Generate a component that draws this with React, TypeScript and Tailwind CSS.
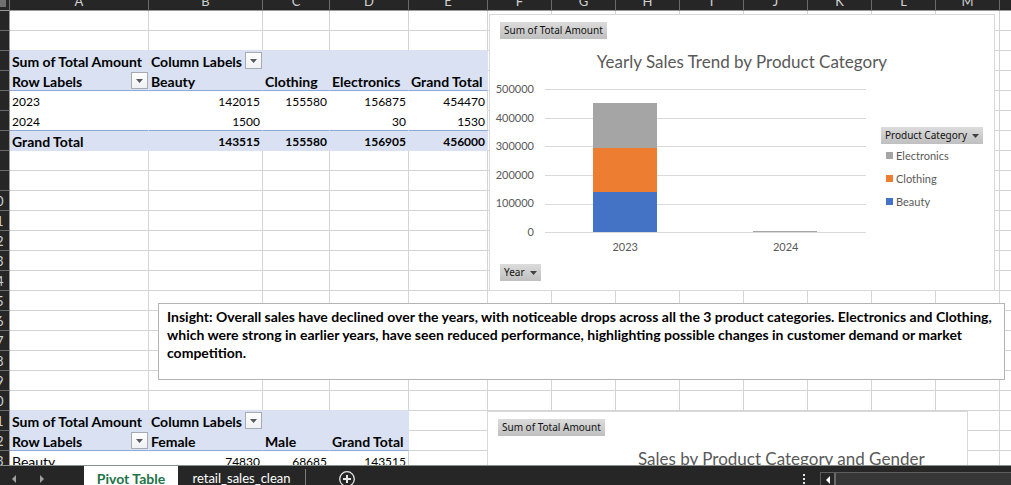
import type { ReactNode } from "react";

type Cell = { value: string; align: "left" | "right"; filter?: string };
type PivotRow = { kind: "head" | "headEnd" | "body" | "bodyEnd" | "total"; cells: (Cell | null)[] };

const letters = ["A", "B", "C", "D", "E", "F", "G", "H", "I", "J", "K", "L", "M", "N", "O", "P", "Q", "R", "S", "T"];
const label = (value: string, filter?: string): Cell => ({ value, align: "left", filter });
const num = (value: string): Cell => ({ value, align: "right" });

const pivotRows: Record<number, PivotRow> = {
  3: {
    kind: "head",
    cells: [label("Sum of Total Amount"), label("Column Labels", "Filter columns"), null, null, null],
  },
  4: {
    kind: "headEnd",
    cells: [label("Row Labels", "Filter rows"), label("Beauty"), label("Clothing"), label("Electronics"), label("Grand Total")],
  },
  5: { kind: "body", cells: [label("2023"), num("142015"), num("155580"), num("156875"), num("454470")] },
  6: { kind: "bodyEnd", cells: [label("2024"), num("1500"), null, num("30"), num("1530")] },
  7: { kind: "total", cells: [label("Grand Total"), num("143515"), num("155580"), num("156905"), num("456000")] },
  21: {
    kind: "head",
    cells: [label("Sum of Total Amount"), label("Column Labels", "Filter columns"), null, null],
  },
  22: {
    kind: "headEnd",
    cells: [label("Row Labels", "Filter rows"), label("Female"), label("Male"), label("Grand Total")],
  },
  23: { kind: "body", cells: [label("Beauty"), num("74830"), num("68685"), num("143515")] },
};

const kindClass = {
  head: "bg-[#d9e1f2] border-[#d9e1f2] font-bold",
  headEnd: "bg-[#d9e1f2] border-r-[#d9e1f2] border-b-[#8ea9db] font-bold",
  body: "border-white",
  bodyEnd: "border-r-white border-b-[#8ea9db]",
  total: "bg-[#d9e1f2] border-[#d9e1f2] font-bold",
};

function cellClass(row: number, col: number) {
  const pivot = pivotRows[row];
  if (pivot && col < pivot.cells.length) {
    const last = col === pivot.cells.length - 1;
    if (last && pivot.kind === "body") return "border-r-[#d4d4d4] border-b-white";
    if (last && pivot.kind === "bodyEnd") return "border-r-[#d4d4d4] border-b-[#8ea9db]";
    return kindClass[pivot.kind];
  }
  const below = pivotRows[row + 1];
  if (below && col < below.cells.length) return "border-r-[#d4d4d4] border-b-[#d9e1f2]";
  return "border-[#d4d4d4]";
}

function FilterButton({ name }: { name: string }) {
  return (
    <button
      type="button"
      aria-label={name}
      className="flex size-[17px] shrink-0 items-center justify-center border border-[#a6abb3] bg-linear-to-b from-white to-[#f0f1f4]"
    >
      <svg width="7" height="4" viewBox="0 0 7 4">
        <path d="M0 0h7L3.500 4z" fill="#595959" />
      </svg>
    </button>
  );
}

function CellContent({ cell }: { cell?: Cell | null }) {
  const numeric = cell ? /^\d+$/.test(cell.value) : false;
  return (
    <div
      className={`flex h-[19px] items-center pl-[2px] whitespace-nowrap ${
        cell?.align === "right" ? "justify-end pr-[2px]" : "justify-between"
      }`}
    >
      {cell && <span className={numeric ? "pt-[2px] text-xs" : "pt-[2px] text-sm"}>{cell.value}</span>}
      {cell?.filter && <FilterButton name={cell.filter} />}
    </div>
  );
}

function Sheet() {
  const rows = Array.from({ length: 60 }, (_, i) => i + 1);
  return (
    <table className="w-px table-fixed border-separate border-spacing-0 text-[13px]">
      <colgroup>
        <col className="w-[10px]" />
        <col className="w-[139px]" />
        <col className="w-[114px]" />
        <col className="w-[67px]" />
        <col className="w-[79px]" />
        <col className="w-[79px]" />
        {letters.slice(5).map((l) => (
          <col key={l} className="w-16" />
        ))}
      </colgroup>
      <thead>
        <tr className="bg-[#262626] text-[#d0d0d0]">
          <td className="border-r border-b border-r-[#6a6a6a] border-b-[#9a9a9a] p-0 align-top">
            <div className="h-[7px] w-[6px] bg-[#6f6f6f]" />
          </td>
          {letters.map((l) => (
            <th key={l} scope="col" className="border-r border-b border-r-[#6a6a6a] border-b-[#9a9a9a] p-0 font-normal">
              <div className="flex h-[10px] items-end justify-center overflow-hidden leading-[18px]">{l}</div>
            </th>
          ))}
        </tr>
      </thead>
      <tbody>
        {rows.map((r) => (
          <tr key={r}>
            <th
              scope="row"
              className="border-r border-b border-r-[#9a9a9a] border-b-[#6a6a6a] bg-[#262626] p-0 font-normal text-[#d0d0d0]"
            >
              <div className="flex h-[19px] justify-end overflow-hidden">
                <span className="w-[26px] shrink-0 text-center text-[13px] leading-[21px]">{r}</span>
              </div>
            </th>
            {letters.map((l, c) => (
              <td key={l} className={`border-r border-b p-0 ${cellClass(r, c)}`}>
                <CellContent cell={pivotRows[r]?.cells[c]} />
              </td>
            ))}
          </tr>
        ))}
      </tbody>
    </table>
  );
}

function FieldButton({ children, arrow }: { children: ReactNode; arrow?: boolean }) {
  return (
    <button
      type="button"
      className="flex h-[17px] w-fit items-center gap-[5px] bg-linear-to-b from-[#dcdcdc] to-[#bfbfbf] px-1 font-['Noto_Sans',sans-serif] text-[10px] leading-[17px] whitespace-nowrap text-[#111]"
    >
      {children}
      {arrow && (
        <svg width="7" height="4" viewBox="0 0 7 4">
          <path d="M0 0h7L3.500 4z" fill="#404040" />
        </svg>
      )}
    </button>
  );
}

const ticks = ["500000", "400000", "300000", "200000", "100000", "0"];
const legend = [
  { name: "Electronics", swatch: "bg-[#a5a5a5]" },
  { name: "Clothing", swatch: "bg-[#ed7d31]" },
  { name: "Beauty", swatch: "bg-[#4472c4]" },
];

function YearlyChart() {
  return (
    <section className="absolute top-[14px] left-[489px] flex h-[277px] w-[506px] flex-col border border-[#d9d9d9] bg-white px-[10px] pt-[7px] text-[#595959]">
      <FieldButton>Sum of Total Amount</FieldButton>
      <h2 className="mt-3 text-center text-[17px] leading-[22px]">Yearly Sales Trend by Product Category</h2>
      <div className="mt-[9px] flex">
        <div className="flex h-[157px] w-[34px] flex-col items-end justify-between text-[11px] leading-[14px]">
          {ticks.map((t) => (
            <span key={t}>{t}</span>
          ))}
        </div>
        <div className="ml-[11px] w-[321px] pt-[7px]">
          <svg width="321" height="144" viewBox="0 0 321 144" shapeRendering="crispEdges" className="block">
            <path d="M0 .5h321M0 29.500h321M0 57.500h321M0 86.500h321M0 115.500h321M0 143.500h321" stroke="#d9d9d9" />
            <rect x="48" y="14" width="64" height="45" fill="#a5a5a5" />
            <rect x="48" y="59" width="64" height="44" fill="#ed7d31" />
            <rect x="48" y="103" width="64" height="40" fill="#4472c4" />
            <rect x="208" y="142" width="64" height="1" fill="#a5a5a5" />
          </svg>
          <div className="mt-[7px] flex justify-around text-[11px] leading-[14px]">
            <span>2023</span>
            <span>2024</span>
          </div>
        </div>
        <div className="ml-[15px] pt-[45px]">
          <FieldButton arrow>Product Category</FieldButton>
          <ul className="mt-1 flex flex-col gap-2 pl-[5px] text-[11px] leading-[15px]">
            {legend.map((item) => (
              <li key={item.name} className="flex items-center gap-[3px]">
                <span className={`size-[7px] ${item.swatch}`} />
                {item.name}
              </li>
            ))}
          </ul>
        </div>
      </div>
      <div className="mt-auto pb-[9px]">
        <FieldButton arrow>Year</FieldButton>
      </div>
    </section>
  );
}

function GenderChart() {
  return (
    <section className="absolute top-[411px] left-[487px] h-[277px] w-[481px] border border-[#d9d9d9] bg-white px-[10px] pt-[7px] text-[#595959]">
      <FieldButton>Sum of Total Amount</FieldButton>
      <h2 className="mt-3 pl-[140px] text-[17px] leading-[22px] whitespace-nowrap">
        Sales by Product Category and Gender
      </h2>
    </section>
  );
}

function Insight() {
  return (
    <p className="absolute top-[303px] left-[158px] h-[77px] w-[847px] border border-[#b4b4b4] bg-white px-2 py-1 text-sm leading-[18px] font-bold whitespace-nowrap">
      Insight: Overall sales have declined over the years, with noticeable drops across all the 3 product categories.
      Electronics and Clothing,
      <br />
      which were strong in earlier years, have seen reduced performance, highlighting possible changes in customer
      demand or market
      <br />
      competition.
    </p>
  );
}

function TabBar() {
  return (
    <nav className="flex h-5 shrink-0 border-t border-[#8a918a] bg-[#262626] text-[13px] leading-[25px] text-white">
      <div className="flex w-[84px] items-center gap-6 pt-[7px] pl-3">
        <button type="button" aria-label="Previous sheet">
          <svg width="4" height="8" viewBox="0 0 4 8">
            <path d="M4 0v8L0 4z" fill="#a0a0a0" />
          </svg>
        </button>
        <button type="button" aria-label="Next sheet">
          <svg width="4" height="8" viewBox="0 0 4 8">
            <path d="M0 0v8l4-4z" fill="#a0a0a0" />
          </svg>
        </button>
      </div>
      <button type="button" className="w-[94px] bg-white text-sm leading-[25px] font-bold text-[#217346]">
        Pivot Table
      </button>
      <button type="button" className="w-[127px]">
        retail_sales_clean
      </button>
      <span className="mt-[3px] w-px bg-[#7a7a7a]" />
      <button type="button" aria-label="New sheet" className="ml-[33px] overflow-hidden pt-[5px]">
        <svg width="16" height="16" viewBox="0 0 16 16" fill="none" stroke="#e6e6e6">
          <circle cx="8" cy="8" r="7.300" strokeWidth="1.300" />
          <path d="M8 4v8M4 8h8" strokeWidth="2" />
        </svg>
      </button>
      <svg width="3" height="11" viewBox="0 0 3 11" className="mt-2 mr-[14px] ml-auto" fill="#e6e6e6">
        <path d="M0 0h2v2H0zM0 4h2v2H0zM0 8h2v2H0z" />
      </svg>
      <div className="mt-[6px] flex w-[191px] border-t border-l border-[#5e5e5e] bg-[#363636]">
        <button
          type="button"
          aria-label="Scroll left"
          className="flex w-[15px] justify-center border-r-2 border-[#6a6a6a] bg-[#262626] pt-[3px]"
        >
          <svg width="4" height="8" viewBox="0 0 4 8">
            <path d="M4 0v8L0 4z" fill="#fff" />
          </svg>
        </button>
      </div>
    </nav>
  );
}

export default function App() {
  return (
    <div className="flex h-screen flex-col overflow-hidden bg-white font-[Lato,'Noto_Sans',sans-serif] text-black">
      <main className="relative min-h-0 flex-1 overflow-hidden">
        <Sheet />
        <YearlyChart />
        <Insight />
        <GenderChart />
      </main>
      <TabBar />
    </div>
  );
}
